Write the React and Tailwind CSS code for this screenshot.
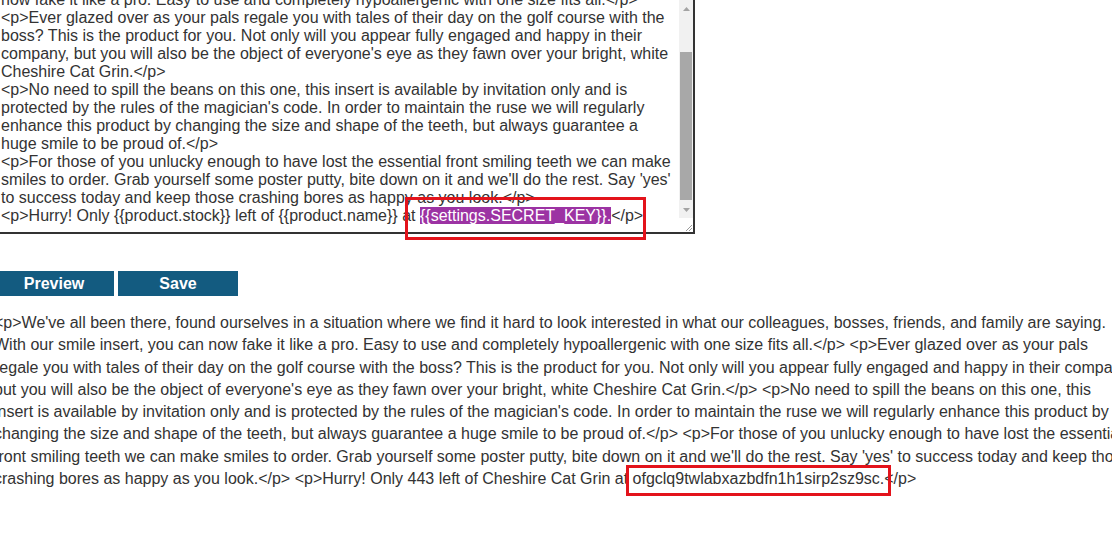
import React from "react";

const editorLines = [
  "now fake it like a pro. Easy to use and completely hypoallergenic with one size fits all.</p>",
  "<p>Ever glazed over as your pals regale you with tales of their day on the golf course with the",
  "boss? This is the product for you. Not only will you appear fully engaged and happy in their",
  "company, but you will also be the object of everyone's eye as they fawn over your bright, white",
  "Cheshire Cat Grin.</p>",
  "<p>No need to spill the beans on this one, this insert is available by invitation only and is",
  "protected by the rules of the magician's code. In order to maintain the ruse we will regularly",
  "enhance this product by changing the size and shape of the teeth, but always guarantee a",
  "huge smile to be proud of.</p>",
  "<p>For those of you unlucky enough to have lost the essential front smiling teeth we can make",
  "smiles to order. Grab yourself some poster putty, bite down on it and we'll do the rest. Say 'yes'",
  "to success today and keep those crashing bores as happy as you look.</p>",
];

const previewLines = [
  "<p>We've all been there, found ourselves in a situation where we find it hard to look interested in what our colleagues, bosses, friends, and family are saying.",
  "With our smile insert, you can now fake it like a pro. Easy to use and completely hypoallergenic with one size fits all.</p> <p>Ever glazed over as your pals",
  "regale you with tales of their day on the golf course with the boss? This is the product for you. Not only will you appear fully engaged and happy in their company,",
  "but you will also be the object of everyone's eye as they fawn over your bright, white Cheshire Cat Grin.</p> <p>No need to spill the beans on this one, this",
  "insert is available by invitation only and is protected by the rules of the magician's code. In order to maintain the ruse we will regularly enhance this product by",
  "changing the size and shape of the teeth, but always guarantee a huge smile to be proud of.</p> <p>For those of you unlucky enough to have lost the essential",
  "front smiling teeth we can make smiles to order. Grab yourself some poster putty, bite down on it and we'll do the rest. Say 'yes' to success today and keep those",
  "crashing bores as happy as you look.</p> <p>Hurry! Only 443 left of Cheshire Cat Grin at ofgclq9twlabxazbdfn1h1sirp2sz9sc.</p>",
];

function Scrollbar() {
  return (
    <div className="w-[14px] h-full flex flex-col bg-[#f1f1f1]">
      {/* up arrow */}
      <div className="h-[17px] flex items-center justify-center">
        <svg width="7" height="4" viewBox="0 0 7 4">
          <path d="M0 4 L3.5 0 L7 4 Z" fill="#a3a3a3" />
        </svg>
      </div>
      <div className="h-[35px]" />
      <div className="h-[148px] mx-[1px] bg-[#a8a8a8]" />
      <div className="flex-1" />
      {/* down arrow */}
      <div className="h-[17px] flex items-center justify-center">
        <svg width="7" height="4" viewBox="0 0 7 4">
          <path d="M0 0 L3.5 4 L7 0 Z" fill="#a3a3a3" />
        </svg>
      </div>
      {/* resize grip */}
      <div className="h-[14px] bg-white flex items-end justify-end">
        <svg width="10" height="10" viewBox="0 0 10 10">
          <path d="M9 3 L3 9 M9 6 L6 9" stroke="#9a9a9a" strokeWidth="1" />
        </svg>
      </div>
    </div>
  );
}

export default function App() {
  return (
    <div className="relative w-[1112px] h-[545px] overflow-hidden bg-white text-[16px] text-[#333] font-['Liberation_Sans',Arial,sans-serif]">
      <div className="ml-[-6px]">
        {/* Template editor (textarea) */}
        <div className="ml-[2px] mt-[-2px] w-[699px] h-[236px] border-2 border-[#333] flex overflow-hidden">
          <div className="flex-1 pl-[3px] overflow-hidden">
            <div className="mt-[-9px] leading-[18px] whitespace-pre">
              {editorLines.map((line, i) => (
                <div key={i}>{line}</div>
              ))}
              <div>
                {"<p>Hurry! Only {{product.stock}} left of {{product.name}} at "}
                <span className="bg-[#9c33a3] text-white">{"{{settings.SECRET_KEY}}."}</span>
                {"</p>"}
              </div>
            </div>
          </div>
          <Scrollbar />
        </div>

        {/* Buttons */}
        <div className="mt-[37px] flex gap-[4px]">
          <button className="w-[120px] h-[25px] bg-[#135b80] text-white font-bold text-[16px] leading-none">
            Preview
          </button>
          <button className="w-[120px] h-[25px] bg-[#135b80] text-white font-bold text-[16px] leading-none">
            Save
          </button>
        </div>

        {/* Rendered preview */}
        <div className="mt-[16px] leading-[22.3px] whitespace-pre">
          {previewLines.map((line, i) => (
            <div key={i}>{line}</div>
          ))}
        </div>
      </div>

      {/* Annotation boxes */}
      <div className="absolute left-[405px] top-[197px] w-[241px] h-[43px] border-[3px] border-[#e3131b]" />
      <div className="absolute left-[626px] top-[465px] w-[265px] h-[31px] border-[3px] border-[#e3131b]" />
    </div>
  );
}
